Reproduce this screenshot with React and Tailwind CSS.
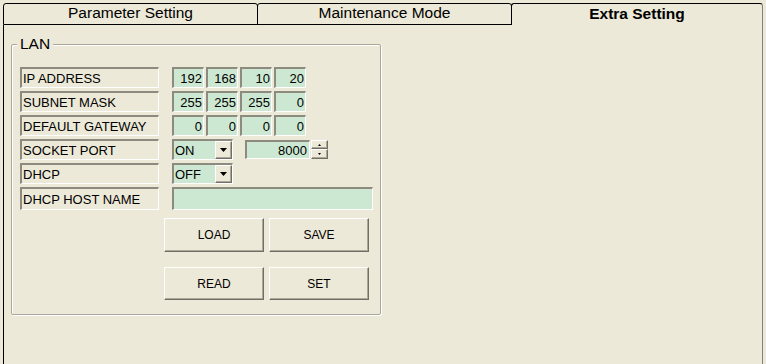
const sunken =
  "border-t-2 border-l-2 border-b border-r border-t-[#8d8b80] border-l-[#8d8b80] border-b-white border-r-white";
const raised =
  "border border-t-white border-l-white border-b-[#716f64] border-r-[#716f64] shadow-[inset_-1px_-1px_0_#aca899]";

function Label({ children, tall }) {
  return (
    <div
      className={`w-[139px] ${tall ? "h-[23px]" : "h-[21px]"} ${sunken} flex items-center pl-[1px] text-[13px] text-black leading-none`}
    >
      {children}
    </div>
  );
}

function Octet({ value }) {
  return (
    <div
      className={`w-[32px] h-[21px] ${sunken} bg-[#cde8d2] flex items-center justify-end pr-[1px] text-[13px] leading-none`}
    >
      {value}
    </div>
  );
}

function IpRow({ label, values }) {
  return (
    <div className="flex items-center gap-[13px]">
      <Label>{label}</Label>
      <div className="flex gap-[2px]">
        {values.map((v, i) => (
          <Octet key={i} value={v} />
        ))}
      </div>
    </div>
  );
}

function Select({ value }) {
  return (
    <div className={`w-[61px] h-[21px] ${sunken} bg-[#cde8d2] flex items-center justify-between`}>
      <span className="pl-[1px] text-[13px] leading-none">{value}</span>
      <div className={`w-[17px] h-full bg-[#ece9d8] ${raised} flex items-center justify-center`}>
        <svg width="7" height="4" viewBox="0 0 7 4">
          <path d="M0 0h7L3.5 4z" fill="#000" />
        </svg>
      </div>
    </div>
  );
}

function Spinner({ value }) {
  return (
    <div className="flex items-start gap-[1px] self-start mt-[1px]">
      <div
        className={`w-[65px] h-[19px] ${sunken} bg-[#cde8d2] flex items-center justify-end pr-[2px] text-[13px] leading-none`}
      >
        {value}
      </div>
      <div className="flex flex-col w-[17px]">
        <div className={`h-[9px] bg-[#ece9d8] ${raised} flex items-center justify-center`}>
          <svg width="3" height="2" viewBox="0 0 3 2">
            <path d="M1.5 0L3 2H0z" fill="#000" />
          </svg>
        </div>
        <div className={`h-[10px] bg-[#ece9d8] ${raised} flex items-center justify-center`}>
          <svg width="3" height="2" viewBox="0 0 3 2">
            <path d="M0 0h3L1.5 2z" fill="#000" />
          </svg>
        </div>
      </div>
    </div>
  );
}

function Button({ children, h }) {
  return (
    <button
      className={`w-[100px] ${h} bg-[#ece9d8] ${raised} text-[12px] text-black leading-none flex items-center justify-center`}
    >
      {children}
    </button>
  );
}

export default function App() {
  return (
    <div className="w-[766px] h-[364px] overflow-hidden bg-[#ece9d8] pt-[3px] pl-[3px] font-['Liberation_Sans',Arial,sans-serif] text-black">
      {/* tab strip */}
      <div className="flex h-[22px] items-stretch">
        <div className="w-[255px] border border-black rounded-t-[3px] flex items-center justify-center text-[15.5px] pb-[2px]">
          Parameter Setting
        </div>
        <div className="w-[255px] -ml-[1px] border border-black rounded-t-[3px] flex items-center justify-center text-[15.5px] pb-[2px]">
          Maintenance Mode
        </div>
        <div className="w-[252px] -ml-[1px] border-t border-l border-r border-t-black border-l-black border-r-[#808080] rounded-t-[3px] flex items-center justify-center text-[15.5px] font-bold pb-[1px]">
          Extra Setting
        </div>
      </div>

      {/* page */}
      <div className="w-[760px] h-[400px] border-l border-l-black border-r border-r-[#808080] pl-[7px] pt-[19px]">
        <div className="relative w-[370px] border border-[#aca899] rounded-[2px] shadow-[1px_1px_0_#fff,inset_1px_1px_0_#fff] pt-[22px] pl-[8px] pb-[14px]">
          <span className="absolute -top-[9px] left-[5px] bg-[#ece9d8] px-[3px] text-[15.5px] leading-none">
            LAN
          </span>

          <div className="flex flex-col gap-[3px]">
            <IpRow label="IP ADDRESS" values={["192", "168", "10", "20"]} />
            <IpRow label="SUBNET MASK" values={["255", "255", "255", "0"]} />
            <IpRow label="DEFAULT GATEWAY" values={["0", "0", "0", "0"]} />
            <div className="flex items-start gap-[13px]">
              <Label>SOCKET PORT</Label>
              <div className="flex gap-[12px]">
                <Select value="ON" />
                <Spinner value="8000" />
              </div>
            </div>
            <div className="flex items-center gap-[13px]">
              <Label>DHCP</Label>
              <Select value="OFF" />
            </div>
            <div className="flex items-center gap-[13px]">
              <Label tall>DHCP HOST NAME</Label>
              <div className={`w-[201px] h-[23px] ${sunken} bg-[#cde8d2]`} />
            </div>
          </div>

          <div className="ml-[144px] mt-[8px] flex flex-col gap-[15px]">
            <div className="flex gap-[5px]">
              <Button h="h-[34px]">LOAD</Button>
              <Button h="h-[34px]">SAVE</Button>
            </div>
            <div className="flex gap-[5px]">
              <Button h="h-[33px]">READ</Button>
              <Button h="h-[33px]">SET</Button>
            </div>
          </div>
        </div>
      </div>
    </div>
  );
}
